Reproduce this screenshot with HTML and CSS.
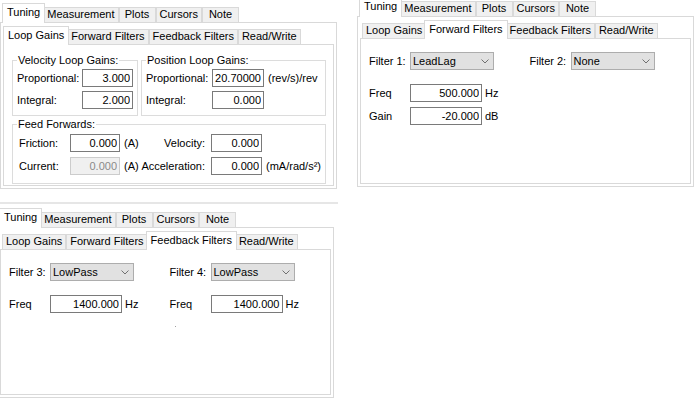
FILE: index.html
```html
<!DOCTYPE html>
<html lang="en">
<head>
    <meta charset="UTF-8">
    <meta name="viewport" content="width=device-width, initial-scale=1.0">
    <title>Tuning Panels</title>
    <link rel="stylesheet" href="styles.css">
</head>
<body>
<div class="desk">

    <!-- Tuning / Loop Gains -->
    <section class="panel">
        <div class="tabs">
            <span class="tab active">Tuning</span>
            <span class="tab">Measurement</span>
            <span class="tab">Plots</span>
            <span class="tab">Cursors</span>
            <span class="tab">Note</span>
        </div>
        <div class="page">
            <div class="tabs sub">
                <span class="tab active">Loop Gains</span>
                <span class="tab">Forward Filters</span>
                <span class="tab">Feedback Filters</span>
                <span class="tab">Read/Write</span>
            </div>
            <div class="subpage gains">
                <div class="group-row">
                    <fieldset class="group group-velocity">
                        <legend>Velocity Loop Gains:</legend>
                        <div class="grid grid-velocity">
                            <label>Proportional:</label>
                            <input class="num" type="text" value="3.000">
                            <label>Integral:</label>
                            <input class="num" type="text" value="2.000">
                        </div>
                    </fieldset>
                    <fieldset class="group group-position">
                        <legend>Position Loop Gains:</legend>
                        <div class="grid grid-position">
                            <label>Proportional:</label>
                            <input class="num" type="text" value="20.70000">
                            <span class="unit">(rev/s)/rev</span>
                            <label>Integral:</label>
                            <input class="num" type="text" value="0.000">
                            <span></span>
                        </div>
                    </fieldset>
                </div>
                <fieldset class="group group-feed">
                    <legend>Feed Forwards:</legend>
                    <div class="grid grid-feed">
                        <label class="indent">Friction:</label>
                        <input class="num" type="text" value="0.000">
                        <span class="unit">(A)</span>
                        <label class="right">Velocity:</label>
                        <input class="num" type="text" value="0.000">
                        <span></span>

                        <label class="indent">Current:</label>
                        <input class="num" type="text" value="0.000" disabled>
                        <span class="unit">(A)</span>
                        <label class="right">Acceleration:</label>
                        <input class="num" type="text" value="0.000">
                        <span class="unit">(mA/rad/s²)</span>
                    </div>
                </fieldset>
            </div>
        </div>
    </section>

    <!-- Tuning / Forward Filters -->
    <section class="panel panel-raised">
        <div class="tabs">
            <span class="tab active">Tuning</span>
            <span class="tab">Measurement</span>
            <span class="tab">Plots</span>
            <span class="tab">Cursors</span>
            <span class="tab">Note</span>
        </div>
        <div class="page">
            <div class="tabs sub">
                <span class="tab">Loop Gains</span>
                <span class="tab active">Forward Filters</span>
                <span class="tab">Feedback Filters</span>
                <span class="tab">Read/Write</span>
            </div>
            <div class="subpage filters">
                <div class="filter-row top">
                    <div class="pair">
                        <label class="field-label">Filter 1:</label>
                        <div class="combo"><span>LeadLag</span><svg width="8" height="5" viewBox="0 0 8 5"><polyline points="0.5,0.5 4,4 7.5,0.5" fill="none" stroke="#707070" stroke-width="1"/></svg></div>
                    </div>
                    <div class="pair">
                        <label class="field-label">Filter 2:</label>
                        <div class="combo"><span>None</span><svg width="8" height="5" viewBox="0 0 8 5"><polyline points="0.5,0.5 4,4 7.5,0.5" fill="none" stroke="#707070" stroke-width="1"/></svg></div>
                    </div>
                </div>
                <div class="filter-row">
                    <div class="pair">
                        <label class="field-label">Freq</label>
                        <input class="num" type="text" value="500.000">
                        <span class="unit">Hz</span>
                    </div>
                </div>
                <div class="filter-row">
                    <div class="pair">
                        <label class="field-label">Gain</label>
                        <input class="num" type="text" value="-20.000">
                        <span class="unit">dB</span>
                    </div>
                </div>
            </div>
        </div>
    </section>

    <!-- Tuning / Feedback Filters -->
    <div class="lower">
        <section class="panel">
            <div class="tabs">
                <span class="tab active">Tuning</span>
                <span class="tab">Measurement</span>
                <span class="tab">Plots</span>
                <span class="tab">Cursors</span>
                <span class="tab">Note</span>
            </div>
            <div class="page">
                <div class="tabs sub">
                    <span class="tab">Loop Gains</span>
                    <span class="tab">Forward Filters</span>
                    <span class="tab active">Feedback Filters</span>
                    <span class="tab">Read/Write</span>
                </div>
                <div class="subpage filters">
                    <div class="filter-row top">
                        <div class="pair">
                            <label class="field-label">Filter 3:</label>
                            <div class="combo"><span>LowPass</span><svg width="8" height="5" viewBox="0 0 8 5"><polyline points="0.5,0.5 4,4 7.5,0.5" fill="none" stroke="#707070" stroke-width="1"/></svg></div>
                        </div>
                        <div class="pair">
                            <label class="field-label">Filter 4:</label>
                            <div class="combo"><span>LowPass</span><svg width="8" height="5" viewBox="0 0 8 5"><polyline points="0.5,0.5 4,4 7.5,0.5" fill="none" stroke="#707070" stroke-width="1"/></svg></div>
                        </div>
                    </div>
                    <div class="filter-row">
                        <div class="pair">
                            <label class="field-label">Freq</label>
                            <input class="num" type="text" value="1400.000">
                            <span class="unit">Hz</span>
                        </div>
                        <div class="pair">
                            <label class="field-label">Freq</label>
                            <input class="num" type="text" value="1400.000">
                            <span class="unit">Hz</span>
                        </div>
                    </div>
                    <div class="speck"></div>
                </div>
            </div>
        </section>
    </div>

</div>
</body>
</html>
```

FILE: styles.css
```css
* {
    box-sizing: border-box;
}
body {
    margin: 0;
    background: #ffffff;
    font: 11px/13px "Liberation Sans", Arial, sans-serif;
    color: #000000;
    overflow: hidden;
}
.desk {
    display: grid;
    grid-template-columns: 357px 342px;
    grid-template-rows: 202px 197px;
    height: 399px;
    overflow: hidden;
}
.panel {
    width: 337px;
}
.panel-raised {
    margin-top: -6px;
}
.lower {
    grid-column: 1;
    width: 338px;
    border-top: 2px solid #e6e6e6;
    padding-top: 1px;
}
.lower .panel {
    margin-left: -3px;
}

/* tab strips */
.tabs {
    display: flex;
    align-items: flex-end;
    height: 22px;
    padding-left: 4px;
}
.tabs.sub {
    height: 19px;
    padding-left: 2px;
}
.tab {
    height: 15px;
    min-width: 37px;
    padding: 0 3px;
    border: 1px solid #d9d9d9;
    border-bottom: none;
    background: #f0f0f0;
    text-align: center;
    white-space: nowrap;
}
.tab.active {
    height: 20px;
    margin: 0 -2px -1px;
    padding: 2px 4px 0;
    background: #ffffff;
    position: relative;
    z-index: 1;
}
.tabs.sub .tab.active {
    height: 19px;
}
.page {
    border: 1px solid #d9d9d9;
    background: #ffffff;
    padding: 2px;
}
.subpage {
    border: 1px solid #d9d9d9;
    height: 142px;
}

/* loop gains page */
.gains {
    padding: 9px 0 0 8px;
}
.group-row {
    display: flex;
    gap: 3px;
}
.group {
    margin: 0;
    padding: 2px 4px 6px;
    border: 1px solid #dcdcdc;
    min-width: 0;
}
.group legend {
    padding: 0 1px;
    line-height: 13px;
}
.group-velocity {
    width: 126px;
}
.group-position {
    width: 185px;
}
.group-feed {
    width: 314px;
    margin-top: 2px;
    padding: 3px 4px 8px;
}
.grid {
    display: grid;
    row-gap: 4px;
    align-items: center;
}
.grid-velocity {
    grid-template-columns: 65px 51px;
}
.grid-position {
    grid-template-columns: 66px 52px auto;
}
.grid-feed {
    grid-template-columns: 53px 50px 20px 71px 51px auto;
    row-gap: 5px;
}
.indent {
    padding-left: 2px;
}
.right {
    text-align: right;
    padding-right: 6px;
    white-space: nowrap;
}
.grid .unit {
    padding-left: 4px;
    white-space: nowrap;
}

/* inputs */
.num {
    width: 100%;
    height: 18px;
    margin: 0;
    padding: 0 2px;
    border: 1px solid #7a7a7a;
    border-radius: 0;
    background: #ffffff;
    font: inherit;
    color: #000000;
    text-align: right;
}
.num:disabled {
    background: #f0f0f0;
    border-color: #cccccc;
    color: #8a8a8a;
}
.combo {
    width: 84px;
    height: 18px;
    padding: 0 4px 0 2px;
    border: 1px solid #adadad;
    background: #e1e1e1;
    display: flex;
    align-items: center;
    justify-content: space-between;
}

/* filter pages */
.filters {
    height: 146px;
    padding: 13px 0 0 8px;
}
.filter-row {
    display: flex;
    margin-top: 5px;
}
.filter-row.top {
    margin-top: 0;
    margin-bottom: 14px;
}
.pair {
    display: flex;
    align-items: center;
    width: 163px;
}
.field-label {
    width: 41px;
}
.pair .num {
    width: 72px;
}
.pair .unit {
    margin-left: 3px;
}
.speck {
    width: 1px;
    height: 1px;
    margin: 13px 0 0 166px;
    background: #a0a0a0;
}
```
